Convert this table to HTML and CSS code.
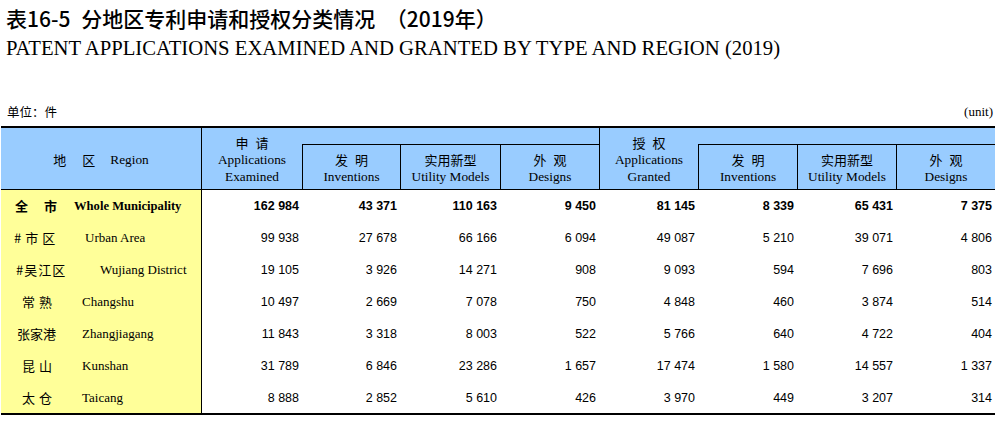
FILE: index.html
```html
<!DOCTYPE html>
<html lang="zh-CN">
<head>
<meta charset="utf-8">
<title>表16-5 分地区专利申请和授权分类情况</title>
<link rel="stylesheet" href="styles.css">
</head>
<body>
<div class="page">
  <h1 class="title-cn">表16-5 分地区专利申请和授权分类情况 （2019年）</h1>
  <h2 class="title-en">PATENT APPLICATIONS EXAMINED AND GRANTED BY TYPE AND REGION (2019)</h2>
  <div class="unit-row"><span class="unit-cn">单位：件</span><span class="unit-en">(unit)</span></div>

  <div class="table">
    <div class="h h-region"><span class="hz">地</span><span class="hz hz-2">区</span><span class="he">Region</span></div>
    <div class="h h-apply"><span class="hz sp">申请</span><span class="he">Applications</span><span class="he">Examined</span></div>
    <div class="h h-fill-a"></div>
    <div class="h h-grant"><span class="hz sp">授权</span><span class="he">Applications</span><span class="he">Granted</span></div>
    <div class="h h-fill-b"></div>
    <div class="h h-sub"><span class="hz sp">发明</span><span class="he">Inventions</span></div>
    <div class="h h-sub"><span class="hz">实用新型</span><span class="he">Utility Models</span></div>
    <div class="h h-sub"><span class="hz sp">外观</span><span class="he">Designs</span></div>
    <div class="h h-sub"><span class="hz sp">发明</span><span class="he">Inventions</span></div>
    <div class="h h-sub"><span class="hz">实用新型</span><span class="he">Utility Models</span></div>
    <div class="h h-sub"><span class="hz sp">外观</span><span class="he">Designs</span></div>

    <div class="rg total"><span class="cn">全市</span><span class="en">Whole Municipality</span></div>
    <div class="num bold">162 984</div><div class="num bold">43 371</div><div class="num bold">110 163</div><div class="num bold">9 450</div>
    <div class="num bold">81 145</div><div class="num bold">8 339</div><div class="num bold">65 431</div><div class="num bold">7 375</div>

    <div class="rg urban"><span class="cn">#市区</span><span class="en">Urban Area</span></div>
    <div class="num">99 938</div><div class="num">27 678</div><div class="num">66 166</div><div class="num">6 094</div>
    <div class="num">49 087</div><div class="num">5 210</div><div class="num">39 071</div><div class="num">4 806</div>

    <div class="rg wujiang"><span class="cn">#吴江区</span><span class="en">Wujiang District</span></div>
    <div class="num">19 105</div><div class="num">3 926</div><div class="num">14 271</div><div class="num">908</div>
    <div class="num">9 093</div><div class="num">594</div><div class="num">7 696</div><div class="num">803</div>

    <div class="rg two"><span class="cn">常熟</span><span class="en">Changshu</span></div>
    <div class="num">10 497</div><div class="num">2 669</div><div class="num">7 078</div><div class="num">750</div>
    <div class="num">4 848</div><div class="num">460</div><div class="num">3 874</div><div class="num">514</div>

    <div class="rg three"><span class="cn">张家港</span><span class="en">Zhangjiagang</span></div>
    <div class="num">11 843</div><div class="num">3 318</div><div class="num">8 003</div><div class="num">522</div>
    <div class="num">5 766</div><div class="num">640</div><div class="num">4 722</div><div class="num">404</div>

    <div class="rg two"><span class="cn">昆山</span><span class="en">Kunshan</span></div>
    <div class="num">31 789</div><div class="num">6 846</div><div class="num">23 286</div><div class="num">1 657</div>
    <div class="num">17 474</div><div class="num">1 580</div><div class="num">14 557</div><div class="num">1 337</div>

    <div class="rg two"><span class="cn">太仓</span><span class="en">Taicang</span></div>
    <div class="num">8 888</div><div class="num">2 852</div><div class="num">5 610</div><div class="num">426</div>
    <div class="num">3 970</div><div class="num">449</div><div class="num">3 207</div><div class="num">314</div>
  </div>
</div>
</body>
</html>
```

FILE: styles.css
```css
* { box-sizing: border-box; }

html, body {
  margin: 0;
  padding: 0;
  background: #fff;
  color: #000;
}

.page {
  width: 995px;
  padding-top: 6px;
  overflow: hidden;
}

.title-cn {
  margin: 0 0 0 6px;
  font: 500 21px/24px "Noto Sans CJK SC", sans-serif;
  word-spacing: 6px;
  white-space: nowrap;
}

.title-en {
  margin: 6px 0 0 6px;
  font: 400 20.7px/24px "Liberation Serif", serif;
  white-space: nowrap;
}

.unit-row {
  margin-top: 44px;
  height: 16px;
  display: flex;
  justify-content: space-between;
  align-items: center;
  padding: 0 2px 0 7px;
}

.unit-cn {
  font: 400 12.5px/16px "Noto Sans CJK SC", sans-serif;
}

.unit-en {
  font: 400 13px/16px "Liberation Serif", serif;
}

.table {
  margin: 6px 0 0 1px;
  width: 994px;
  display: grid;
  grid-template-columns: 201px 100px 98px 100px 99px 99px 99px 99px 99px;
  grid-template-rows: 17px 45px repeat(6, 32px) 31px;
  border-top: 2px solid #000;
  border-bottom: 2px solid #000;
}

/* header */
.h {
  background: #99ccff;
  border-bottom: 1px solid #000;
  display: flex;
  flex-direction: column;
  align-items: center;
  justify-content: center;
  text-align: center;
}

.h-region {
  grid-row: 1 / 3;
  grid-column: 1;
  flex-direction: row;
  border-right: 1px solid #000;
  padding-top: 1px;
}

.h-apply {
  grid-row: 1 / 3;
  grid-column: 2;
}

.h-fill-a {
  grid-row: 1;
  grid-column: 3 / 6;
}

.h-grant {
  grid-row: 1 / 3;
  grid-column: 6;
  border-left: 1px solid #000;
}

.h-fill-b {
  grid-row: 1;
  grid-column: 7 / 10;
}

.h-sub {
  grid-row: 2;
  border-left: 1px solid #000;
  padding-top: 1px;
}

.h-apply, .h-grant {
  padding-top: 1px;
}

.hz {
  font: 400 13px/17px "Noto Sans CJK SC", sans-serif;
  white-space: nowrap;
}

.he {
  font: 400 13.3px/17px "Liberation Serif", serif;
  white-space: nowrap;
}

.sp {
  letter-spacing: 7px;
  margin-right: -7px;
}

.h-region .hz-2 {
  margin-left: 16px;
}

.h-region .he {
  margin-left: 15px;
}

/* body cells */
.rg {
  background: #ffff99;
  border-right: 1px solid #000;
  display: flex;
  align-items: center;
  white-space: nowrap;
}

.rg .cn {
  display: inline-block;
  font: 400 13px/16px "Noto Sans CJK SC", sans-serif;
}

.rg .en {
  font: 400 13px/16px "Liberation Serif", serif;
}

.rg.total .cn {
  width: 73px;
  padding-left: 14px;
  letter-spacing: 16px;
  font-weight: 700;
}

.rg.total .en {
  font-size: 12.6px;
  font-weight: 700;
}

.rg.urban .cn {
  width: 84px;
  padding-left: 13px;
  letter-spacing: 4px;
}

.rg.wujiang .cn {
  width: 99px;
  padding-left: 15px;
  letter-spacing: 1px;
}

.rg.two .cn {
  width: 81px;
  padding-left: 21px;
  letter-spacing: 4px;
}

.rg.three .cn {
  width: 81px;
  padding-left: 16px;
}

.num {
  display: flex;
  align-items: center;
  justify-content: flex-end;
  padding-right: 3px;
  font: 400 12.5px/16px "Liberation Sans", Arial, sans-serif;
  white-space: nowrap;
}

.num.bold {
  font-weight: 700;
}
```
